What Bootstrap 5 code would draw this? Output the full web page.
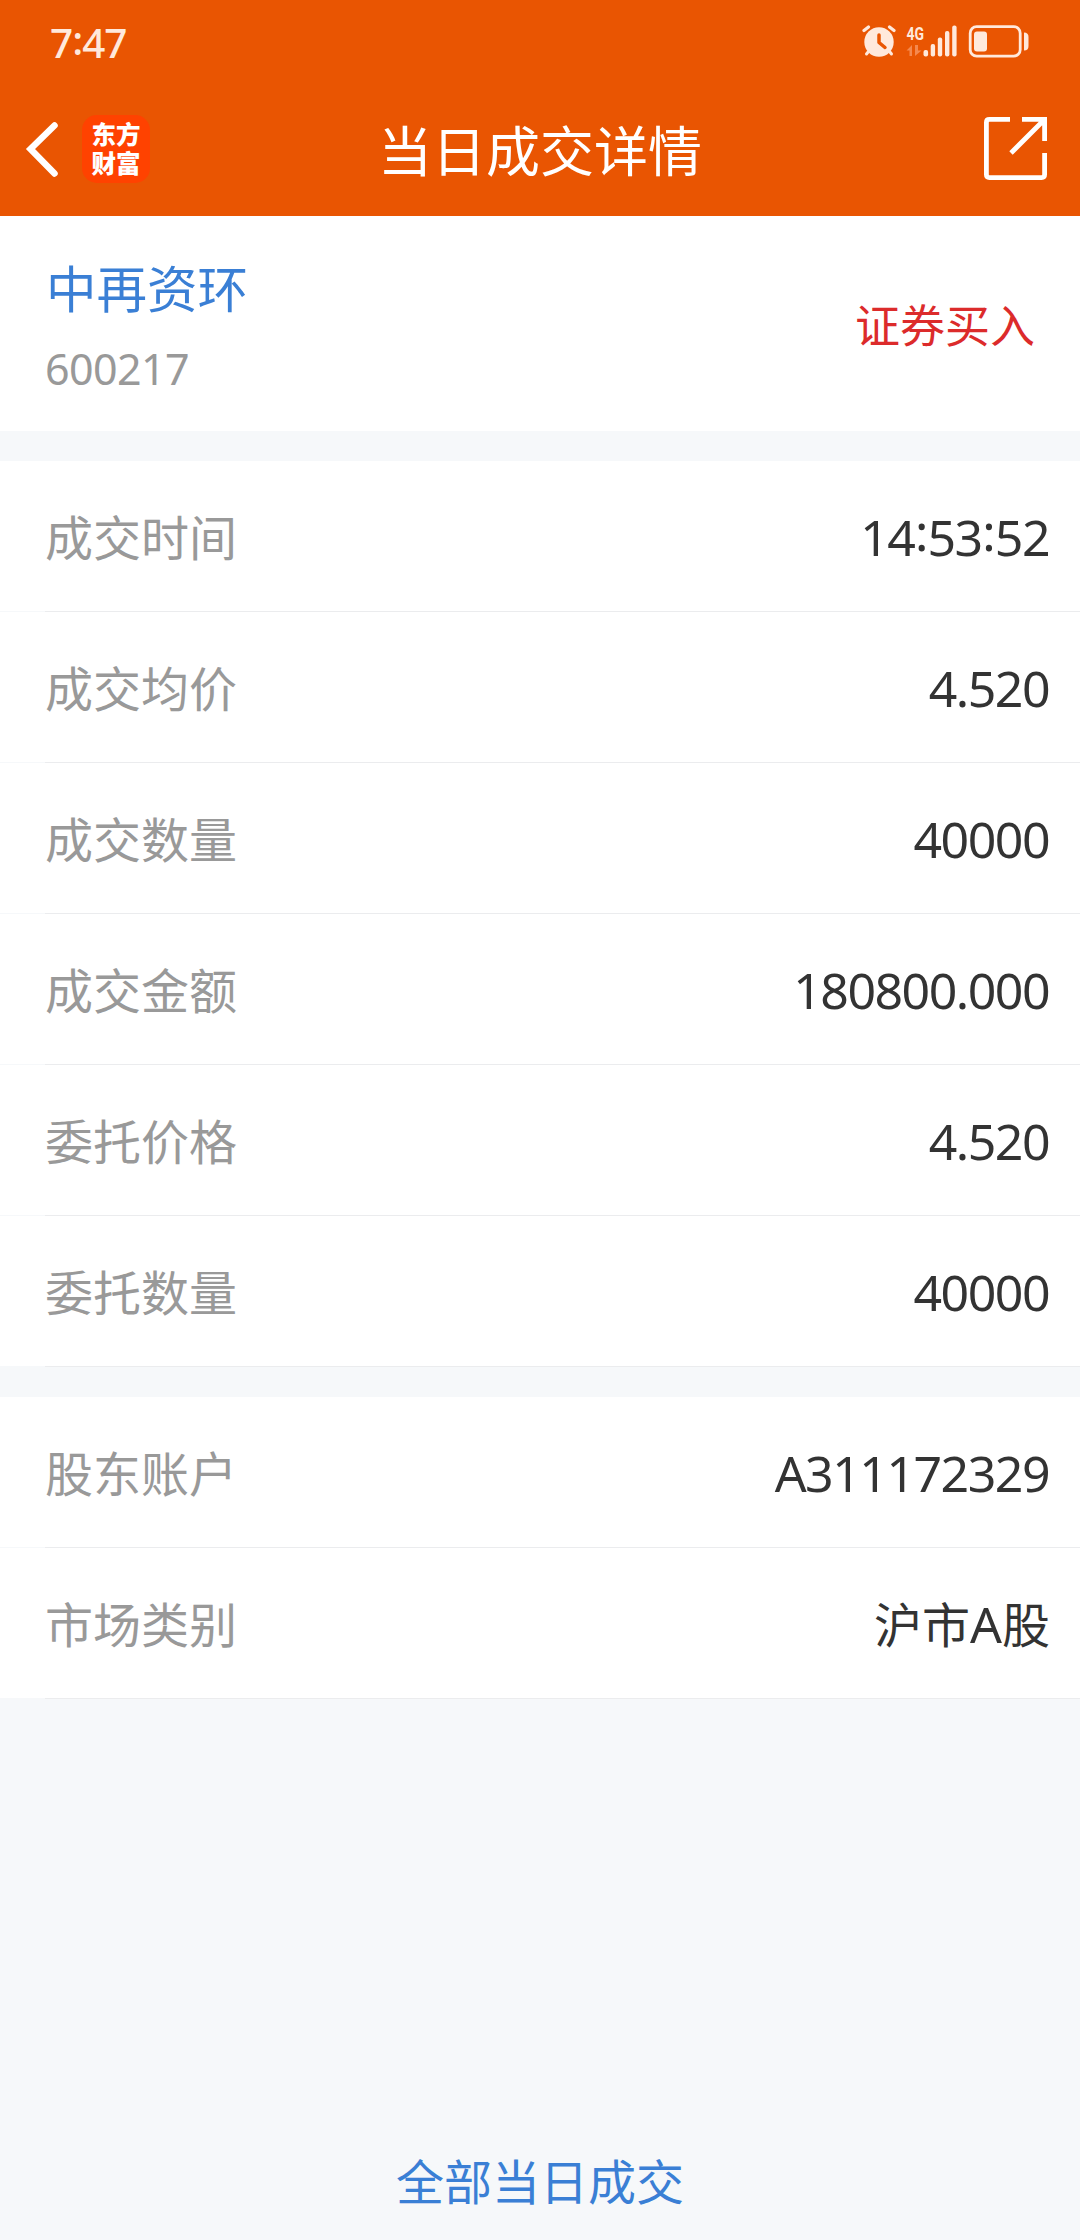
<!DOCTYPE html>
<html lang="zh-CN">
<head>
<meta charset="utf-8">
<meta name="viewport" content="width=device-width, initial-scale=1">
<title>当日成交详情</title>
<link href="https://cdn.jsdelivr.net/npm/bootstrap@5.3.0/dist/css/bootstrap.min.css" rel="stylesheet">
<style>
body{font-family:"Noto Sans CJK SC",sans-serif;background:#f6f8fa;color:#333;line-height:1}
.app-screen{min-height:2240px}
.app-top{background:#e95502;height:216px}
.status-bar{height:82px;padding:0 51px 0 50px;color:#ffe9dc}
.status-time{font-family:"Noto Sans",sans-serif;font-size:40.5px;font-weight:500;line-height:82px;letter-spacing:-1.2px;padding-top:3px}
.title-bar{height:134px;padding:0 32px 0 25px}
.side-slot{width:160px}
.page-title{font-size:54px;line-height:132px;margin-left:7px}
.app-logo{width:68px;height:68px;border-radius:15px;background:#ff4200;margin-left:23px;padding-bottom:3px;font-size:24.5px;line-height:29px;font-weight:900}
.stock-head{height:215px;padding:4px 45px 0 46px}
.stock-name{font-size:50.5px;line-height:80px;color:#3a7fd5}
.stock-code{font-family:"Noto Sans",sans-serif;font-size:43px;line-height:80px;color:#999;letter-spacing:-.6px;margin:3px 0 -3px -1px}
.trade-side{font-size:45px;color:#dc2b2b;line-height:80px;padding-bottom:4px}
.detail-gap{margin-top:30px}
.detail-row{height:151px;padding:0 30px 4px 45px;font-size:48px;background:linear-gradient(#fff,#fff) 0 0/100% 150px no-repeat,linear-gradient(#ebecee,#ebecee) 45px 150px no-repeat}
.detail-key{color:#999}
.num{font-family:"Noto Sans",sans-serif;font-size:50px;letter-spacing:-1.5px;padding-top:4px;margin-right:1px}
.num-inline{font-family:"Noto Sans",sans-serif;font-size:50px;line-height:0}
.colon{position:relative;top:-5px;padding:0 .6px}
.status-time .colon{top:-3px;padding:0 .2px}
.all-link{font-size:48px;color:#3a7fd5;line-height:116px;padding-bottom:3px}
</style>
</head>
<body>
<div class="app-screen d-flex flex-column">
  <header class="app-top">
    <div class="status-bar d-flex justify-content-between align-items-center">
      <span class="status-time">7<span class="colon">:</span>47</span>
      <div class="d-flex align-items-center">
        <svg width="34" height="36" viewBox="862 22 34 36" fill="none" stroke="#ffe9dc" stroke-linecap="round"><circle cx="879" cy="41" r="14.7" fill="#ffe9dc" stroke="none"/><path d="M868.5 50.5 866.5 53M889.5 50.5l2 2.500" stroke-width="3"/><path d="M864 29.500l4.500-3.600M894 29.500l-4.500-3.600" stroke-width="3.200"/><path d="M879 34v7.500l6 5" stroke="#e95502" stroke-width="3.500" stroke-linejoin="round"/></svg>
        <svg class="ms-2" width="54" height="36" viewBox="904 22 54 36" fill="#ffe9dc"><text x="906.500" y="38.500" font-family="Roboto" font-weight="700" font-size="19" textLength="17.500" lengthAdjust="spacingAndGlyphs">4G</text><path d="M906.500 49.500 912 44v11h-2.500v-5.500zM915 44v11l6.500-5.500H918V44z" fill="#f5894f"/><rect x="923.500" y="49" width="4.600" height="6.500" rx="2"/><rect x="930.700" y="43" width="4.400" height="12.500" rx="2"/><rect x="937.800" y="36.500" width="4.400" height="19" rx="2"/><rect x="945" y="30" width="4.400" height="25.500" rx="2"/><rect x="952.200" y="24.500" width="4.400" height="31" rx="2"/></svg>
        <svg style="margin-left:9px" width="62" height="36" viewBox="967 22 62 36" fill="#ffe9dc"><rect x="970.200" y="25.700" width="50" height="29.500" rx="6.500" fill="none" stroke="#ffe9dc" stroke-width="2.800"/><rect x="974" y="30.500" width="13" height="20" rx="3"/><path d="M1024 31.500q4.500 0 4.500 4.500v9q0 4.500-4.500 4.500z"/></svg>
      </div>
    </div>
    <div class="title-bar d-flex justify-content-between align-items-center text-white">
      <div class="side-slot d-flex align-items-center">
        <svg width="34" height="58" viewBox="26 119 34 58" fill="none" stroke="#fff" stroke-width="6.500" stroke-linecap="round" stroke-linejoin="miter"><path d="M55.500 124.500 31.500 148l24 24.500"/></svg>
        <div class="app-logo d-flex align-items-center justify-content-center"><span>东方<br>财富</span></div>
      </div>
      <div class="page-title">当日成交详情</div>
      <div class="side-slot d-flex justify-content-end">
        <svg width="64" height="64" viewBox="984 117 64 64" fill="none" stroke="#fff" stroke-width="4.800"><path d="M1010 119.400h-20.600q-3 0-3 3v52.200q0 3 3 3h52.200q3 0 3-3V153M1022 119.400h22.600V141M1011 153l33-33"/></svg>
      </div>
    </div>
  </header>
  <section class="stock-head bg-white d-flex justify-content-between align-items-center">
    <div><div class="stock-name">中再资环</div><div class="stock-code">600217</div></div>
    <div class="trade-side">证券买入</div>
  </section>
  <section class="detail-gap">
    <div class="detail-row d-flex justify-content-between align-items-center"><span class="detail-key">成交时间</span><span class="num">14<span class="colon">:</span>53<span class="colon">:</span>52</span></div>
    <div class="detail-row d-flex justify-content-between align-items-center"><span class="detail-key">成交均价</span><span class="num">4.520</span></div>
    <div class="detail-row d-flex justify-content-between align-items-center"><span class="detail-key">成交数量</span><span class="num">40000</span></div>
    <div class="detail-row d-flex justify-content-between align-items-center"><span class="detail-key">成交金额</span><span class="num">180800.000</span></div>
    <div class="detail-row d-flex justify-content-between align-items-center"><span class="detail-key">委托价格</span><span class="num">4.520</span></div>
    <div class="detail-row d-flex justify-content-between align-items-center"><span class="detail-key">委托数量</span><span class="num">40000</span></div>
  </section>
  <section class="detail-gap">
    <div class="detail-row d-flex justify-content-between align-items-center"><span class="detail-key">股东账户</span><span class="num">A311172329</span></div>
    <div class="detail-row d-flex justify-content-between align-items-center"><span class="detail-key">市场类别</span><span>沪市<span class="num-inline">A</span>股</span></div>
  </section>
  <footer class="mt-auto text-center all-link">全部当日成交</footer>
</div>
<script src="https://cdn.jsdelivr.net/npm/bootstrap@5.3.0/dist/js/bootstrap.bundle.min.js"></script>
</body>
</html>
